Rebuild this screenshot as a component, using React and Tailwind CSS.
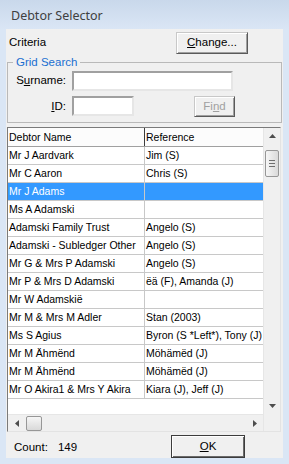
import React from 'react';

const rows = [
    ['Mr J Aardvark', 'Jim (S)'],
    ['Mr C Aaron', 'Chris (S)'],
    ['Mr J Adams', ''],
    ['Ms A Adamski', ''],
    ['Adamski Family Trust', 'Angelo (S)'],
    ['Adamski - Subledger Other', 'Angelo (S)'],
    ['Mr G & Mrs P Adamski', 'Angelo (S)'],
    ['Mr P & Mrs D Adamski', 'ëä (F), Amanda (J)'],
    ['Mr W Adamskië', ''],
    ['Mr M & Mrs M Adler', 'Stan (2003)'],
    ['Ms S Agius', 'Byron (S *Left*), Tony (J)'],
    ['Mr M Ähmënd', 'Möhämëd (J)'],
    ['Mr M Ähmënd', 'Möhämëd (J)'],
    ['Mr O Akira1 & Mrs Y Akira', 'Kiara (J), Jeff (J)'],
];

const Arrow = ({ dir }) => {
    const pts = {
        up: '0,4 3.5,0 7,4',
        down: '0,0 7,0 3.5,4',
        left: '4,0 4,7 0,3.5',
        right: '0,0 4,3.5 0,7',
    }[dir];
    const vertical = dir === 'up' || dir === 'down';
    return (
        <svg width={vertical ? 7 : 4} height={vertical ? 4 : 7} viewBox={vertical ? '0 0 7 4' : '0 0 4 7'}>
            <polygon points={pts} fill="#4d4d4d" />
        </svg>
    );
};

const btn3d =
    'flex items-center justify-center bg-[#f0f0f0] border border-t-[#c8c8c8] border-l-[#c8c8c8] border-r-[#5a5a5a] border-b-[#5a5a5a] shadow-[inset_1px_1px_0_#ffffff,inset_-1px_-1px_0_#a0a0a0]';

const inputSunken =
    'bg-white border-2 border-t-[#a0a0a0] border-l-[#a0a0a0] border-r-[#e6e6e6] border-b-[#e6e6e6]';

export default function App() {
    return (
        <div className="w-[289px] h-[464px] bg-[#dae6f5] flex flex-col font-['Liberation_Sans',Arial,sans-serif] text-[11px] text-black">
            {/* title bar */}
            <div className="h-[29px] pl-[11px] pt-[3px] flex items-center bg-linear-to-b from-[#c9d8eb] to-[#dae6f5] font-['Noto_Sans',sans-serif] text-[12.5px] text-[#404040]">
                Debtor Selector
            </div>

            {/* client area */}
            <div className="mx-[6px] h-[429px] bg-[#f0f0f0] flex flex-col pl-[1px]">
                {/* criteria row */}
                <div className="h-[27px] flex items-start">
                    <div className="pl-[2px] pt-[7px] leading-[13px] text-[11.5px]">Criteria</div>
                    <button className={`${btn3d} ml-auto mr-[35px] mt-[3px] w-[72px] h-[22px] text-[11.5px]`}>
                        <span>
                            <span className="underline">C</span>hange...
                        </span>
                    </button>
                </div>

                {/* grid search group */}
                <fieldset className="w-[275px] border border-[#b9b9b9] pb-[5px]">
                    <legend className="ml-[5px] px-[3px] leading-[13px] text-[11.5px] text-[#1a6fd0]">
                        Grid Search
                    </legend>
                    <div className="flex items-center mt-[2px]">
                        <label className="w-[58px] text-right text-[11.5px]">
                            S<span className="underline">u</span>rname:
                        </label>
                        <div className={`${inputSunken} ml-[6px] w-[161px] h-[20px]`} />
                    </div>
                    <div className="flex items-center mt-[5px]">
                        <label className="w-[58px] text-right text-[11.5px]">
                            <span className="underline">I</span>D:
                        </label>
                        <div className={`${inputSunken} ml-[6px] w-[62px] h-[20px]`} />
                        <button className={`${btn3d} ml-[60px] w-[41px] h-[21px] text-[11.5px] text-[#a0a0a0]`}>
                            <span>
                                Fi<span className="underline">n</span>d
                            </span>
                        </button>
                    </div>
                </fieldset>

                {/* grid */}
                <div className="mt-[4px] w-[274px] h-[306px] border border-t-[#7a7a7a] border-l-[#7a7a7a] border-r-[#e3e3e3] border-b-[#e3e3e3] flex bg-white text-[10.5px]">
                    <div className="w-[255px] flex flex-col">
                        <div className="h-[19px] flex border-b border-[#a0a0a0] bg-[#fcfcfc]">
                            <div className="w-[137px] border-r border-[#3c3c3c] pl-[1px] leading-[18px]">Debtor Name</div>
                            <div className="flex-1 pl-[1px] leading-[18px]">Reference</div>
                        </div>
                        {rows.map(([name, ref], i) => (
                            <div
                                key={i}
                                className={`flex h-[18px] border-b border-[#c8c8c8] ${
                                    i === 2 ? 'bg-[#3399ff] text-white' : 'bg-white'
                                }`}
                            >
                                <div className="w-[137px] border-r border-[#c8c8c8] pl-[1px] leading-[17px] overflow-hidden whitespace-nowrap">
                                    {name}
                                </div>
                                <div className="flex-1 min-w-0 pl-[1px] leading-[17px] overflow-hidden whitespace-nowrap">
                                    {ref}
                                </div>
                            </div>
                        ))}
                        <div className="flex-1" />
                        {/* horizontal scrollbar */}
                        <div className="h-[17px] flex items-center bg-[#f0f0f0] border-t border-[#e6e6e6]">
                            <div className="w-[17px] h-full flex items-center justify-center">
                                <Arrow dir="left" />
                            </div>
                            <div className="w-[16px] h-[15px] ml-px rounded-[2px] border border-[#979797] bg-linear-to-b from-[#f6f6f6] to-[#d9d9d9]" />
                            <div className="ml-auto w-[17px] h-full flex items-center justify-center">
                                <Arrow dir="right" />
                            </div>
                        </div>
                    </div>

                    {/* vertical scrollbar */}
                    <div className="w-[17px] flex flex-col bg-[#f0f0f0] border-l border-[#e6e6e6]">
                        <div className="h-[17px] flex items-center justify-center">
                            <Arrow dir="up" />
                        </div>
                        <div className="flex-1 flex flex-col items-center">
                            <div className="mt-[5px] w-[14px] h-[27px] rounded-[2px] border border-[#979797] bg-linear-to-r from-[#f6f6f6] to-[#dadada] flex flex-col items-center justify-center gap-[2px]">
                                <div className="w-[6px] h-px bg-[#6f6f6f]" />
                                <div className="w-[6px] h-px bg-[#6f6f6f]" />
                                <div className="w-[6px] h-px bg-[#6f6f6f]" />
                            </div>
                        </div>
                        <div className="h-[17px] flex items-center justify-center">
                            <Arrow dir="down" />
                        </div>
                        <div className="h-[17px] bg-[#f0f0f0]" />
                    </div>
                </div>

                {/* bottom row */}
                <div className="flex items-start mt-[3px]">
                    <div className="pl-[7px] pt-[6px] leading-[13px] text-[11.5px]">
                        Count:<span className="ml-[10px]">149</span>
                    </div>
                    <button className="ml-auto mr-[38px] w-[74px] h-[23px] flex items-center justify-center bg-[#f0f0f0] border border-[#3c3c3c] shadow-[inset_1px_1px_0_#ffffff,inset_-1px_-1px_0_#6a6a6a] text-[11.5px]">
                        <span>
                            <span className="underline">O</span>K
                        </span>
                    </button>
                </div>
            </div>
        </div>
    );
}
